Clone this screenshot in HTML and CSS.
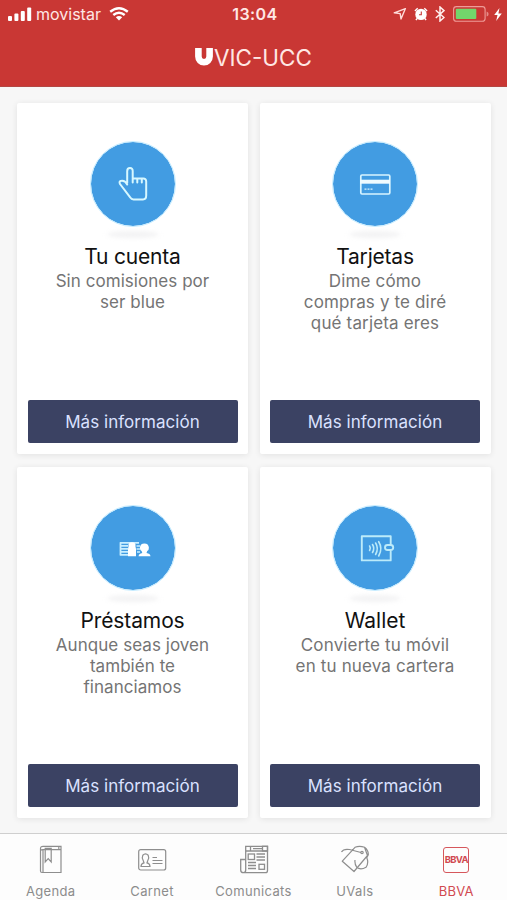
FILE: index.html
```html
<!DOCTYPE html>
<html lang="es">
<head>
<meta charset="utf-8">
<title>UVIC-UCC</title>
<link rel="stylesheet" href="styles.css">
</head>
<body>
<header class="header">
  <div class="status">
    <div class="carrier">
      <svg class="signal" width="24" height="14" viewBox="0 0 24 14" fill="#fff"><rect x="0" y="9" width="4" height="5" rx="1"/><rect x="6.4" y="6.5" width="4" height="7.5" rx="1"/><rect x="12.8" y="4" width="4" height="10" rx="1"/><rect x="19.2" y="0.5" width="4" height="13.5" rx="1"/></svg>
      <span class="operator">movistar</span>
      <svg width="20" height="14" viewBox="0 0 20 14" fill="none" stroke="#fff" stroke-width="2.4"><path d="M1.2 4.8Q10 -2.3 18.8 4.8M4.3 8Q10 3.4 15.7 8"/><path d="M6.8 10.2Q10 7.8 13.2 10.2L10 13.6Z" fill="#fff" stroke="none"/></svg>
    </div>
    <time class="clock">13:04</time>
    <div class="indicators">
      <svg width="14" height="14" viewBox="0 0 14 14" fill="none" stroke="#ffdcda" stroke-width="1.4" stroke-linejoin="round"><path d="M1.2 5.8 12.4 1.6 8 12 7.2 6.6Z"/></svg>
      <svg class="alarm" width="14" height="14" viewBox="0 0 14 14"><circle cx="7" cy="7.4" r="5.7" fill="#fff"/><path d="M.9 3.9 3.7 1.2M10.3 1.2 13.1 3.9M3.2 11.5 1.9 13M10.8 11.5 12.1 13" stroke="#fff" stroke-width="1.4"/><path d="M7.3 4.4V7.8H5" fill="none" stroke="#c93734" stroke-width="1.1"/></svg>
      <svg class="bluetooth" width="10" height="16" viewBox="0 0 10 16" fill="none" stroke="#fff0ee" stroke-width="1.5"><path d="M.8 4.2 9 11.5 5 15V1L9 4.6.8 12"/></svg>
      <svg class="battery" width="37" height="16" viewBox="0 0 37 16"><rect x=".6" y=".6" width="31.5" height="14.6" rx="2.8" fill="none" stroke="#ee9c98" stroke-width="1.1"/><rect x="2.8" y="2.8" width="20.5" height="10.2" rx="1" fill="#72d66b"/><path d="M33.6 5.4Q35.6 6 35.6 8T33.6 10.6Z" fill="#e58b87"/></svg>
      <svg class="bolt" width="8" height="13" viewBox="0 0 8 13" fill="#fff"><path d="M5.5 0 .2 7H3.5L2.2 13 7.8 5.5H4.4Z"/></svg>
    </div>
  </div>
  <h1 class="brand"><svg width="18" height="18" viewBox="0 0 18 18"><path d="M3.4 0V8.6A5.6 5.6 0 0 0 14.6 8.6V0" fill="none" stroke="#fff" stroke-width="6.6"/></svg><span>VIC-UCC</span></h1>
</header>

<main class="grid">
  <article class="card">
    <div class="disc"><svg width="86" height="86" viewBox="0 0 86 86" fill="none" stroke="#d7f8ff" stroke-width="2" stroke-linejoin="round" stroke-linecap="round"><path d="M37.2 42V30.2Q37.2 27 40 27T42.7 30.2V37.5H53Q56.2 37.3 56.2 40.5V54.5Q56.2 58.4 53 58.4H43.5Q41.5 58.4 40 56.2L30 43Q28.6 40 31.5 39.7 35 39.2 37.2 43.5M42.7 37.5V41.5M47.3 37.5V41.5M51.8 37.5V41.5"/></svg></div>
    <h2 class="t1">Tu cuenta</h2>
    <p>Sin comisiones por<br>ser blue</p>
    <a class="button">Más información</a>
  </article>
  <article class="card">
    <div class="disc"><svg width="86" height="86" viewBox="0 0 86 86" fill="none" stroke="#d7f4ff"><rect x="28.8" y="34" width="29" height="19" rx="1.2" stroke-width="1.7"/><path d="M28 40.7H58" stroke-width="4" stroke="#effbff"/><path d="M32.5 48.2H41" stroke-width="1.3" stroke-dasharray="2 1"/></svg></div>
    <h2 class="t2">Tarjetas</h2>
    <p class="wide">Dime cómo<br>compras y te diré<br>qué tarjeta eres</p>
    <a class="button">Más información</a>
  </article>
  <article class="card">
    <div class="disc"><svg width="86" height="86" viewBox="0 0 86 86" fill="#fff"><path d="M30 37.8H49M30 40.8H38M30 43.8H38M30 46.8H38M30 49.8H38M30.5 37.2V50.5" fill="none" stroke="#c8eeff" stroke-width="1.8"/><path d="M38 51.3V44L38.5 41.5V39.3Q39 37.3 42 37.3T45.5 39.3V41.5L46 44V51.3ZM48.5 51.3Q49 48.6 52.3 48L51.6 46Q49.8 45.3 49.9 42.8 50.2 38.4 54.4 38.4T58.9 42.8Q59 45.3 57.2 46L56.5 48Q60.2 48.6 60.5 51.3Z"/><path d="M46.5 41H50M46.5 44H50M47 47H50" stroke="#c8eeff" stroke-width="1.5"/></svg></div>
    <h2 class="t3">Préstamos</h2>
    <p>Aunque seas joven<br>también te<br>financiamos</p>
    <a class="button">Más información</a>
  </article>
  <article class="card">
    <div class="disc"><svg width="86" height="86" viewBox="0 0 86 86" fill="none" stroke="#bcebfa" stroke-width="1.9" stroke-linecap="round" stroke-linejoin="round"><path d="M58.7 39.5V31.2H29.8V55.4H58.7V46.5"/><rect x="53" y="40" width="8.2" height="5" rx="2.5"/><path d="M37.6 41Q39 43 37.6 45.5M40.5 39.5Q43 43.2 40.5 47.5M43.6 38Q47 43.2 43.6 49.5M46.7 36.7Q51 43.2 46.7 51" stroke-width="1.6"/></svg></div>
    <h2 class="t4">Wallet</h2>
    <p class="wide">Convierte tu móvil<br>en tu nueva cartera</p>
    <a class="button">Más información</a>
  </article>
</main>

<nav class="tabs">
  <a class="tab">
    <svg width="30" height="30" viewBox="0 0 30 30" fill="none" stroke="#8e8e8e" stroke-width="1.2"><path d="M4.5 26V3.5Q4.5 1.3 7 1.3H25V27.5H6Q4.5 27.5 4.5 26M4.5 5.5Q5 4.6 7 4.6H25M7 5V27.5M9.2 3.3V17L12.2 13.7 15.2 17V3.3ZM22.8 1.5V4.5"/></svg>
    <span>Agenda</span>
  </a>
  <a class="tab">
    <svg width="30" height="30" viewBox="0 0 30 30" fill="none" stroke="#8e8e8e" stroke-width="1.2"><rect x="1.7" y="4.7" width="27" height="20.3" rx="2"/><path d="M4 21.5Q4 18.5 7 17.8L6.2 15.5Q4.6 12.5 5.8 10.2 8.5 7.6 11.2 10.2 12.4 12.5 10.8 15.5L10 17.8Q13 18.5 13 21.5ZM15.5 12.5H20M15.5 15.5H25.5M15.5 18.5H25.5"/></svg>
    <span>Carnet</span>
  </a>
  <a class="tab">
    <svg class="news" width="30" height="30" viewBox="0 0 30 30" fill="none" stroke="#8e8e8e" stroke-width="1.3"><path d="M6.7 25V1.3H28.5V25.5Q28.5 27.7 26.5 27.7H4.4Q1.7 27.7 1.7 25V14.5H6.7V25Q6.7 27.7 4.4 27.7M6.7 6H28.5M11.5 1.5V6M14 3.7H23"/><rect x="23.5" y="1.3" width="5" height="4.7"/><rect x="9.2" y="9" width="6.3" height="5.5"/><rect x="20" y="19.3" width="5.5" height="5"/><path d="M17.5 9H26M17.5 12H26M17.5 15H26M9 17.5H17M9 20.5H17M9 23.5H17"/></svg>
    <span>Comunicats</span>
  </a>
  <a class="tab">
    <svg width="30" height="30" viewBox="0 0 30 30" fill="none" stroke="#8e8e8e" stroke-width="1.2" stroke-linejoin="round"><path d="M1.5 7Q3.5 3.5 9.5 4.5L21 7.5M14 26.5 2.3 16.2 15 2.3Q19.5.5 24.5 2.3L27.5 10.5ZM24.5 2.3Q28.5 5.3 28.3 9.7L26.8 12.8Q29 18 26 22.3 20.5 25.5 16.8 22.3 14.5 19 15 15"/><circle cx="22" cy="7.5" r="1.2"/></svg>
    <span>UVals</span>
  </a>
  <a class="tab active">
    <div class="bbva">BBVA</div>
    <span>BBVA</span>
  </a>
</nav>
</body>
</html>
```

FILE: styles.css
```css
* { box-sizing: border-box; }
body {
  margin: 0;
  width: 507px;
  height: 900px;
  overflow: hidden;
  display: flex;
  flex-direction: column;
  background: #f7f7f7;
  font-family: Inter, "Liberation Sans", sans-serif;
}
svg { display: block; flex: none; }
.header {
  height: 87px;
  flex: none;
  background: #c93734;
  border-bottom: 1px solid #b34743;
  color: #ffe7e4;
}
.status {
  height: 28px;
  display: grid;
  grid-template-columns: 1fr 62px 1fr;
  align-items: center;
  padding: 0 5px 0 8px;
}
.carrier { display: flex; align-items: center; }
.operator { font-size: 16px; margin: 0 8px 0 4px; }
.clock { font-size: 16px; font-weight: 600; letter-spacing: .4px; text-align: center; }
.indicators { display: flex; align-items: center; justify-content: flex-end; }
.alarm { margin-left: 7px; }
.bluetooth { margin-left: 7px; }
.battery { margin-left: 8px; }
.bolt { margin-left: 4px; }
.brand {
  margin: 0;
  height: 58px;
  display: flex;
  align-items: center;
  justify-content: center;
  font-size: 22.5px;
  font-weight: 400;
}
.brand span { margin-left: 1px; }
.grid {
  display: grid;
  grid-template-columns: 231px 231px;
  grid-auto-rows: 351px;
  gap: 13px 11.5px;
  padding: 16px 0 0 17px;
  height: 746px;
  flex: none;
}
.card {
  display: flex;
  flex-direction: column;
  align-items: center;
  padding: 38px 10.5px 11px;
  background: #fff;
  border-radius: 2px;
  box-shadow: 0 1px 6px rgba(0, 0, 0, .09);
}
.disc {
  width: 86px;
  height: 86px;
  flex: none;
  border: 1px solid #c5ecff;
  border-radius: 50%;
  background: #429ce2;
  background-clip: padding-box;
}
.disc svg { margin: -1px; }
.disc::after {
  content: "";
  display: block;
  width: 52px;
  height: 7px;
  margin: 5px auto 0;
  border-radius: 50%;
  background: #f3f3f4;
  filter: blur(2px);
}
.card h2 {
  margin: 16px 0 0;
  font-size: 21px;
  line-height: 27px;
  font-weight: 400;
  color: #111;
}
.card .t1 { letter-spacing: -.2px; }
.card .t2 { letter-spacing: -.2px; }
.card .t3 { letter-spacing: -.1px; }
.card p {
  margin: 1px 0 0;
  font-size: 17px;
  line-height: 21px;
  letter-spacing: .05px;
  text-align: center;
  color: #747474;
  white-space: nowrap;
}
.card .wide { letter-spacing: .15px; }
.button {
  margin-top: auto;
  width: 210px;
  height: 43px;
  border-radius: 2px;
  background: #3b4263;
  color: #dae1ff;
  font-size: 17px;
  letter-spacing: .05px;
  line-height: 44px;
  text-align: center;
}
.tabs {
  flex: 1;
  display: grid;
  grid-template-columns: repeat(5, 101.4px);
  border-top: 1.5px solid #cfcfcf;
  background: #fdfdfd;
}
.tab {
  display: flex;
  flex-direction: column;
  align-items: center;
  padding-top: 11px;
  color: #8c8c8c;
  font-size: 13px;
  letter-spacing: .35px;
}
.tab span { margin-top: 7px; line-height: 18px; }
.news { margin-left: 1px; }
.tab.active { color: #d14a50; }
.bbva {
  width: 26px;
  height: 26px;
  margin: 2px 0;
  border: 1px solid #d6575c;
  border-radius: 3px;
  font-size: 9.5px;
  font-weight: 700;
  line-height: 24px;
  letter-spacing: -.7px;
  display: flex;
  justify-content: center;
}
.tab.active span { letter-spacing: .2px; }
```
